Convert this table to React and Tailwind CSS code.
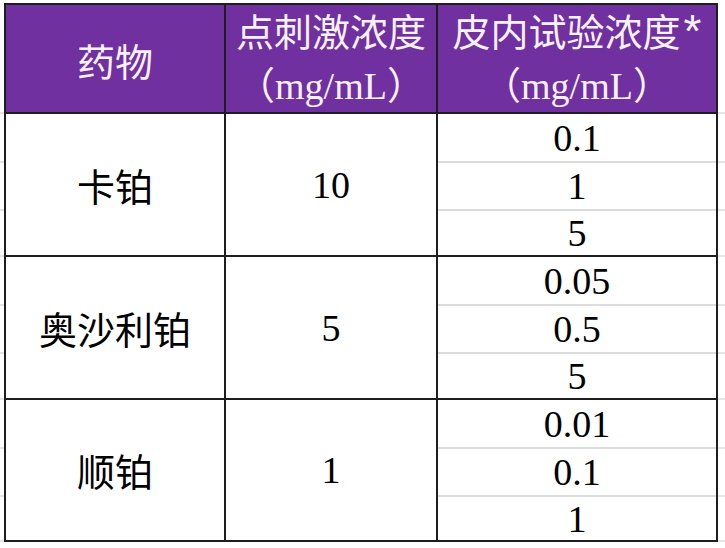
import React from "react";

const cjk = { fontFamily: '"Noto Sans CJK SC", "Noto Sans", sans-serif' };
const serif = { fontFamily: '"Liberation Serif", "Noto Sans CJK SC", serif' };
const sans = { fontFamily: '"Liberation Sans", sans-serif' };

const groups = [
  { name: "卡铂", prick: "10", intra: ["0.1", "1", "5"] },
  { name: "奥沙利铂", prick: "5", intra: ["0.05", "0.5", "5"] },
  { name: "顺铂", prick: "1", intra: ["0.01", "0.1", "1"] },
];

function Strip({ className }) {
  return (
    <div className={"flex flex-col " + className}>
      <div className="h-[5px] shrink-0" />
      <div className="h-[109px] shrink-0 border-b-2 border-[#e4e4e4]" />
      {groups.map((g, i) => (
        <React.Fragment key={i}>
          <div className="h-[49px] shrink-0 border-b-2 border-[#e4e4e4]" />
          <div className="h-[48px] shrink-0 border-b-2 border-[#e4e4e4]" />
          <div className={(i === 2 ? "h-[45px]" : "h-[46px]") + " shrink-0 border-b-2 border-[#e4e4e4]"} />
        </React.Fragment>
      ))}
    </div>
  );
}

export default function App() {
  return (
    <div className="w-[725px] h-[548px] bg-white flex overflow-hidden">
      <Strip className="w-[4px] shrink-0" />
      <div className="w-[714px] shrink-0 mt-[3px] self-start border-t-2 border-x-2 border-[#1e1e1e]">
        <div className="h-[109px] grid grid-cols-[220px_212px_1fr] bg-[#7030a0] border-b-2 border-[#1e1e1e] text-[#f7f2fa]">
          <div className="border-r-2 border-[#1e1e1e] flex items-center justify-center text-[38px] leading-none" style={cjk}>
            药物
          </div>
          <div className="border-r-2 border-[#1e1e1e] flex flex-col items-center justify-center text-[38px] leading-[56px]">
            <div style={cjk} className="mt-[-3px]">点刺激浓度</div>
            <div style={serif} className="text-[38px]">（mg/mL）</div>
          </div>
          <div className="flex flex-col items-center justify-center text-[38px] leading-[56px]">
            <div style={cjk} className="mt-[-3px] flex items-start">
              <span>皮内试验浓度</span>
              <span style={sans} className="text-[46px] leading-none mt-[6px] ml-[3px]">*</span>
            </div>
            <div style={serif} className="text-[38px]">（mg/mL）</div>
          </div>
        </div>
        {groups.map((g, i) => (
          <div
            key={i}
            className={(i === 2 ? "h-[142px]" : "h-[143px]") + " grid grid-cols-[220px_212px_1fr] border-b-2 border-[#1e1e1e] text-black"}
          >
            <div className="border-r-2 border-[#1e1e1e] flex items-center justify-center text-[38px] leading-none" style={cjk}>
              {g.name}
            </div>
            <div className="border-r-2 border-[#1e1e1e] flex items-center justify-center text-[38px] leading-none" style={serif}>
              {g.prick}
            </div>
            <div className="flex flex-col">
              <div className="h-[49px] shrink-0 border-b-2 border-[#dcdcdc] flex items-center justify-center text-[38px] leading-none" style={serif}>
                {g.intra[0]}
              </div>
              <div className="h-[48px] shrink-0 border-b-2 border-[#dcdcdc] flex items-center justify-center text-[38px] leading-none" style={serif}>
                {g.intra[1]}
              </div>
              <div className="flex-1 flex items-center justify-center text-[38px] leading-none" style={serif}>
                {g.intra[2]}
              </div>
            </div>
          </div>
        ))}
      </div>
      <Strip className="flex-1" />
    </div>
  );
}
